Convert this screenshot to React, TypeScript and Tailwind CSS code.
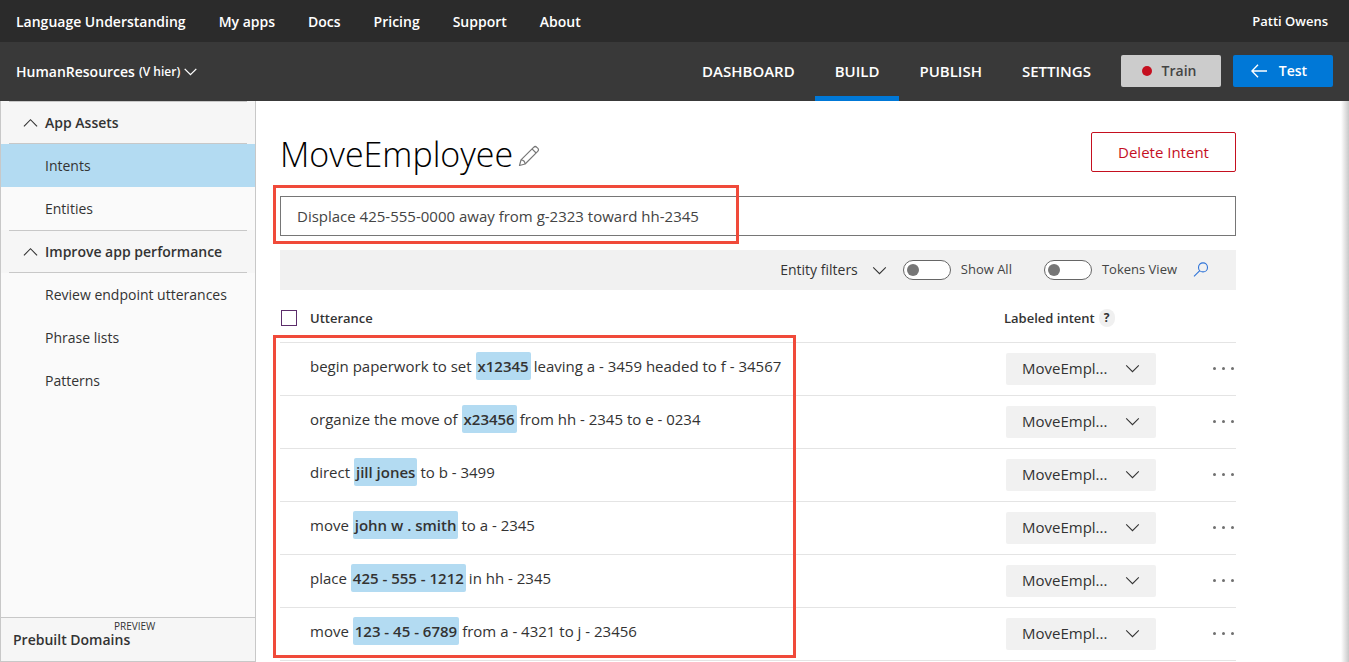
import React from "react";

type Utterance = { before: string; entity: string; after: string };

const topLinks = ["My apps", "Docs", "Pricing", "Support", "About"];
const tabs = ["DASHBOARD", "BUILD", "PUBLISH", "SETTINGS"];

const sections = [
  { title: "App Assets", items: ["Intents", "Entities"] },
  {
    title: "Improve app performance",
    items: ["Review endpoint utterances", "Phrase lists", "Patterns"],
  },
];

const utterances: Utterance[] = [
  { before: "begin paperwork to set", entity: "x12345", after: "leaving a - 3459 headed to f - 34567" },
  { before: "organize the move of", entity: "x23456", after: "from hh - 2345 to e - 0234" },
  { before: "direct", entity: "jill jones", after: "to b - 3499" },
  { before: "move", entity: "john w . smith", after: "to a - 2345" },
  { before: "place", entity: "425 - 555 - 1212", after: "in hh - 2345" },
  { before: "move", entity: "123 - 45 - 6789", after: "from a - 4321 to j - 23456" },
];

function Chevron({ className, up = false }: { className: string; up?: boolean }) {
  return (
    <svg viewBox="0 0 16 10" fill="none" stroke="currentColor" strokeWidth="1.2" className={className} aria-hidden="true">
      <path d={up ? "M1 8.5 8 1.5l7 7" : "M1 1.5l7 7 7-7"} />
    </svg>
  );
}

function Header() {
  return (
    <header className="text-white">
      <div className="flex h-[42px] items-center justify-between bg-[#2b2b2b] pt-0.5 pr-[21px] pl-4">
        <nav className="flex items-center gap-[33px] text-sm font-semibold">
          <a href="#home">Language Understanding</a>
          {topLinks.map((link) => (
            <a key={link} href={`#${link}`}>
              {link}
            </a>
          ))}
        </nav>
        <a href="#account" className="text-[13px] font-semibold">
          Patti Owens
        </a>
      </div>
      <div className="flex h-[59px] justify-between bg-[#393939] pr-4 pl-4">
        <button type="button" className="flex items-center gap-1 font-semibold">
          <span className="text-sm">HumanResources</span>
          <span className="text-xs">(V hier)</span>
          <svg viewBox="0 0 13 8" fill="none" stroke="currentColor" strokeWidth="1.3" className="h-2 w-[13px]" aria-hidden="true">
            <path d="M.7.9 6.5 6.7 12.3.9" />
          </svg>
        </button>
        <div className="flex items-center">
          <nav className="mr-[10px] flex h-full text-[15px] font-semibold">
            {tabs.map((tab) => (
              <a
                key={tab}
                href={`#${tab}`}
                className={`flex items-center border-y-[5px] border-t-transparent px-5 ${
                  tab === "BUILD" ? "border-b-[#0078d7]" : "border-b-transparent"
                }`}
              >
                {tab}
              </a>
            ))}
          </nav>
          <button
            type="button"
            className="mr-3 mb-px flex h-8 w-[100px] items-center justify-center gap-[10px] rounded-xs bg-[#cccccc] pr-1 text-sm font-semibold text-[#444]"
          >
            <span className="size-[10px] rounded-full bg-[#c50f1f]" />
            Train
          </button>
          <button
            type="button"
            className="mb-px flex h-8 w-[100px] items-center justify-center gap-3 rounded-xs bg-[#0078d7] pr-2 text-sm font-semibold"
          >
            <svg viewBox="0 0 16 14" fill="none" stroke="currentColor" strokeWidth="1.4" className="h-[14px] w-4" aria-hidden="true">
              <path d="M16 7H1M7 .8.9 7 7 13.2" />
            </svg>
            Test
          </button>
        </div>
      </div>
    </header>
  );
}

function Sidebar() {
  return (
    <aside className="flex w-64 shrink-0 flex-col border-x border-b border-[#c8c8c8] bg-[#fafafa] text-sm text-[#333]">
      {sections.map((section) => (
        <section key={section.title}>
          <div className="bg-[#f6f6f6] px-2">
            <button
              type="button"
              className="flex h-[43px] w-full items-center gap-[7px] border-y border-[#c8c8c8] pl-[14px] font-semibold"
            >
              <Chevron up className="h-[10px] w-[15px]" />
              {section.title}
            </button>
          </div>
          <ul>
            {section.items.map((item) => (
              <li key={item}>
                <a
                  href={`#${item}`}
                  className={`flex h-[43px] items-center pl-11 ${item === "Intents" ? "bg-[#b3dbf2]" : ""}`}
                >
                  {item}
                </a>
              </li>
            ))}
          </ul>
        </section>
      ))}
      <a
        href="#prebuilt"
        className="mt-auto flex h-11 items-center border-t border-[#c8c8c8] bg-[#f6f6f6] pl-3 font-semibold"
      >
        <span className="relative leading-4">
          Prebuilt Domains
          <span className="absolute -top-[11px] left-[101px] text-[10px] leading-[10px] font-normal">PREVIEW</span>
        </span>
      </a>
    </aside>
  );
}

function Toggle({ label }: { label: string }) {
  return (
    <label className="flex items-center gap-[10px]">
      <input
        type="checkbox"
        role="switch"
        className="flex h-5 w-12 appearance-none items-center rounded-full border border-[#666] bg-white pl-[3px] before:size-3 before:rounded-full before:bg-[#767676]"
      />
      {label}
    </label>
  );
}

function Toolbar() {
  return (
    <div className="mt-[14px] flex h-10 items-center justify-end bg-[#f1f1f1] pr-[27px] text-[13px] text-[#444]">
      <button type="button" className="mr-4 flex items-center gap-[14px] text-sm text-[#333]">
        Entity filters
        <Chevron className="h-[9px] w-[15px]" />
      </button>
      <div className="mr-4 flex gap-8">
        <Toggle label="Show All" />
        <Toggle label="Tokens View" />
      </div>
      <button type="button" aria-label="Search">
        <svg viewBox="0 0 16 16" fill="none" stroke="#2f74d8" strokeWidth="1.1" className="size-4">
          <circle cx="10" cy="5.4" r="4.5" />
          <path d="M6.8 8.6 1 14.4" />
        </svg>
      </button>
    </div>
  );
}

function UtteranceTable() {
  return (
    <div className="relative">
      <table className="w-full table-fixed border-collapse text-left text-[#333]">
        <thead>
          <tr className="h-[52px] border-b border-[#e4e4e4] text-[13px]">
            <th className="w-[30px] p-0 pt-1 pl-px">
              <input
                type="checkbox"
                aria-label="Select all utterances"
                className="block size-4 appearance-none border border-[#5c2d6b] bg-white"
              />
            </th>
            <th className="p-0 pt-[5px] font-semibold">Utterance</th>
            <th className="w-[232px] p-0 pt-[5px] font-semibold">
              <span className="flex items-center gap-1">
                Labeled intent
                <button type="button" className="h-[18px] w-4 rounded-full bg-[#f0f0f0] text-xs leading-4 font-bold">
                  ?
                </button>
              </span>
            </th>
          </tr>
        </thead>
        <tbody>
          {utterances.map((u) => (
            <tr key={u.entity} className="h-[53px] border-b border-[#e4e4e4]">
              <td className="p-0" />
              <td className="p-0 pt-[9px] align-top text-[15px] leading-7">
                {u.before}{" "}
                <mark className="inline-block rounded-xs bg-[#b3dbf2] px-[2px] font-semibold text-[#333]">{u.entity}</mark>
                <span className="pl-[3px]">{u.after}</span>
              </td>
              <td className="p-0">
                <div className="flex items-center justify-between pl-[2px]">
                  <div className="relative w-[150px]">
                    <select
                      aria-label={`Labeled intent for ${u.before} ${u.entity}`}
                      className="block h-8 w-full appearance-none rounded-xs bg-[#f1f1f1] pl-4 text-[15px] text-[#333]"
                    >
                      <option>MoveEmpl...</option>
                    </select>
                    <Chevron className="pointer-events-none absolute top-[11px] right-4 h-[9px] w-[15px]" />
                  </div>
                  <button type="button" aria-label="More options" className="flex gap-[6px] pr-[2px]">
                    <span className="size-[3px] rounded-full bg-[#707070]" />
                    <span className="size-[3px] rounded-full bg-[#707070]" />
                    <span className="size-[3px] rounded-full bg-[#707070]" />
                  </button>
                </div>
              </td>
            </tr>
          ))}
        </tbody>
      </table>
      <div className="pointer-events-none absolute top-[45px] -left-[7px] h-[323px] w-[523px] border-3 border-[#f04a3a]" />
    </div>
  );
}

export default function App() {
  return (
    <div className="flex min-h-screen flex-col bg-white font-['Open_Sans',sans-serif]">
      <Header />
      <div className="flex flex-1">
        <Sidebar />
        <main className="min-w-0 flex-1 pt-[31px] pr-[105px] pl-6">
          <div className="flex h-10 items-center justify-between">
            <div className="flex items-center gap-[5px] pt-1">
              <h1 className="text-[34px] font-light text-black">MoveEmployee</h1>
              <button type="button" aria-label="Rename intent" className="pt-1">
                <svg viewBox="0 0 22 22" fill="none" stroke="#777" strokeWidth="1.2" strokeLinejoin="round" className="size-[22px]">
                  <path d="M1.5 20.5 3 14.9 15.6 2.3c.9-.9 2.3-.9 3.2 0l.9.9c.9.9.9 2.3 0 3.2L7.1 19 1.5 20.5z" />
                  <path d="M3 14.9c2.2.2 3.9 1.9 4.1 4.1M14 3.9l4.100 4.100" />
                </svg>
              </button>
            </div>
            <button
              type="button"
              className="h-10 w-[145px] rounded-xs border border-[#c50f1f] text-[15px] text-[#c50f1f]"
            >
              Delete Intent
            </button>
          </div>
          <div className="relative mt-6">
            <input
              type="text"
              aria-label="New utterance"
              defaultValue="Displace 425-555-0000 away from g-2323 toward hh-2345"
              className="block h-10 w-full border border-[#767676] px-4 text-[15px] text-[#444]"
            />
            <div className="pointer-events-none absolute -top-[11px] -left-[7px] h-[59px] w-[466px] border-3 border-[#f04a3a]" />
          </div>
          <Toolbar />
          <UtteranceTable />
        </main>
        <div className="w-2 shrink-0 bg-linear-to-r from-white to-[#c8c8c8]" />
      </div>
    </div>
  );
}
